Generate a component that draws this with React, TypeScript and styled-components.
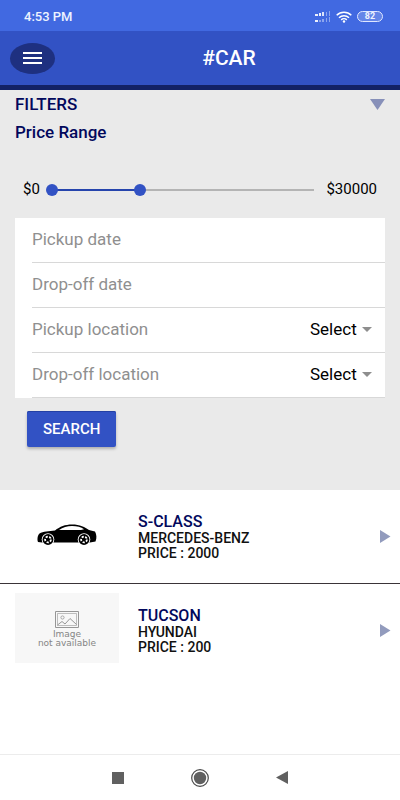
import React, { useState } from "react";
import styled, { createGlobalStyle } from "styled-components";

const MAX_PRICE = 30000;

const GlobalStyle = createGlobalStyle`
  *, *::before, *::after { box-sizing: border-box; }
  body {
    margin: 0;
    background: #ffffff;
    color: #000000;
    font-family: Roboto, "Liberation Sans", sans-serif;
    font-size: 17px;
  }
  button, input, select { font: inherit; color: inherit; }
  button { cursor: pointer; }
`;

const Page = styled.div`
  display: flex;
  flex-direction: column;
  min-height: 100vh;
`;

const StatusBar = styled.div`
  display: flex;
  align-items: center;
  justify-content: space-between;
  height: 31px;
  padding: 2px 17px 0 24px;
  background: #4169e1;
  color: #eef3ff;
`;

const Clock = styled.span`
  font-size: 13px;
  font-weight: 500;
  line-height: 16px;
`;

const StatusIcons = styled.div`
  display: flex;
  align-items: center;
  gap: 5px;
`;

const Battery = styled.span`
  width: 26px;
  height: 11px;
  border: 1px solid #dfe7ff;
  border-radius: 6px;
  background: #6485e8;
  font-size: 9px;
  font-weight: 700;
  line-height: 9px;
  text-align: center;
`;

const Header = styled.header`
  display: grid;
  grid-template-columns: 48px 1fr;
  align-items: center;
  height: 59px;
  padding-left: 10px;
  border-bottom: 5px solid #132266;
  background: #3252c4;
  color: #ffffff;
`;

const MenuButton = styled.button`
  display: flex;
  align-items: center;
  justify-content: center;
  width: 45px;
  height: 31px;
  padding: 0;
  border: 0;
  border-radius: 50%;
  background: #1e3080;
`;

const Title = styled.h1`
  margin: 0;
  font-size: 21px;
  font-weight: 500;
  line-height: 24px;
  text-align: center;
`;

const Filters = styled.section`
  padding: 4px 15px 43px;
  background: #eaeaea;
`;

const FiltersHead = styled.div`
  display: flex;
  align-items: center;
  justify-content: space-between;
`;

const Heading = styled.h2`
  margin: 0;
  color: #02085c;
  font-size: 17px;
  font-weight: 500;
  line-height: 20px;
`;

const SubHeading = styled(Heading).attrs({ as: "h3" })`
  margin-top: 8px;
`;

const IconButton = styled.button`
  display: flex;
  padding: 0;
  border: 0;
  background: none;
`;

const PriceRow = styled.div`
  display: flex;
  align-items: center;
  height: 20px;
  margin: 37px 8px 19px;
`;

const PriceLabel = styled.span`
  font-size: 15px;
  line-height: 20px;
`;

const Slider = styled.div`
  position: relative;
  flex: 1;
  height: 12px;
  margin: 2px 12px 0 6px;
`;

const Track = styled.div`
  height: 2px;
  margin: 5px 0 0 6px;
  background: #b4b4b4;
`;

const TrackFill = styled.div`
  height: 2px;
  background: #2645ad;
`;

const RangeInput = styled.input.attrs({ type: "range" })`
  position: absolute;
  top: 0;
  left: 0;
  width: 100%;
  height: 12px;
  margin: 0;
  appearance: none;
  background: none;
  pointer-events: none;

  &::-webkit-slider-thumb {
    width: 12px;
    height: 12px;
    border: 0;
    border-radius: 50%;
    appearance: none;
    background: #3252c4;
    pointer-events: auto;
  }
`;

const FormCard = styled.div`
  padding-left: 17px;
  background: #ffffff;
`;

const Field = styled.div`
  display: flex;
  align-items: center;
  height: 45px;
  padding: 0 13px 2px 0;
  border-bottom: 1px solid #d8d8d8;
`;

const FieldLabel = styled.label`
  flex: 1;
  color: #8f8f8f;
  line-height: 20px;
  white-space: nowrap;
`;

const DateInput = styled.input`
  width: 50%;
  min-width: 0;
  padding: 0;
  border: 0;
  outline: 0;
  background: none;
`;

const SelectBox = styled.span`
  display: flex;
  align-items: center;
  gap: 5px;
`;

const Select = styled.select`
  padding: 0;
  border: 0;
  outline: 0;
  appearance: none;
  background: none;
  line-height: 20px;
`;

const SearchButton = styled.button`
  height: 36px;
  margin: 13px 0 0 12px;
  padding: 0 16px;
  border: 0;
  border-radius: 2px;
  background: #3252c4;
  box-shadow: 0 2px 3px rgba(0, 0, 0, 0.25), inset 0 1px 0 #2340a4;
  color: #ffffff;
  font-size: 15px;
  font-weight: 500;
`;

const CarList = styled.ul`
  margin: 0;
  padding: 0;
  list-style: none;
`;

const CarRow = styled.li`
  display: grid;
  grid-template-columns: 104px 1fr auto;
  align-items: center;
  column-gap: 19px;
  min-height: 94px;
  padding: 9px 9px 10px 15px;
  border-bottom: 1px solid #3a3438;

  &:last-child { border-bottom-color: transparent; }
`;

const Thumb = styled.div<{ $empty?: boolean }>`
  display: flex;
  flex-direction: column;
  align-items: center;
  align-self: start;
  justify-content: center;
  height: 70px;
  padding-top: 2px;
  background: ${(p) => (p.$empty ? "#f7f7f7" : "#ffffff")};
  color: #858585;
  font-family: "DejaVu Sans", sans-serif;
  font-size: 9px;
  line-height: 9px;
  text-align: center;

  svg { margin-bottom: ${(p) => (p.$empty ? "2px" : "0")}; }
`;

const CarName = styled.h3`
  margin: 0;
  color: #02085c;
  font-size: 16px;
  font-weight: 500;
  line-height: 19px;
`;

const CarText = styled.p`
  margin: 0;
  color: #111111;
  font-size: 14px;
  font-weight: 500;
  line-height: 15px;
`;

const NavBar = styled.nav`
  display: flex;
  align-items: center;
  justify-content: center;
  gap: 62px;
  height: 46px;
  margin-top: auto;
  border-top: 1px solid #ececec;
`;

const NavButton = styled(IconButton)`
  justify-content: center;
  width: 20px;
`;

const SignalIcon = () => (
  <svg width="16" height="12" viewBox="0 0 16 12" fill="#ffffff" aria-hidden="true">
    <path d="M0 3h3v2H0zM4 2h2v3H4zM0 9h3v2H0z" opacity=".9" />
    <path d="M7 1h2v4H7z" opacity=".8" />
    <path d="M11 1h1v4h-1zM14 0h1v5h-1zM4 9h2v2H4zM7 8h2v3H7zM11 7h1v4h-1zM14 6h1v5h-1z" opacity=".4" />
  </svg>
);

const WifiIcon = () => (
  <svg width="16" height="12" viewBox="0 0 16 12" fill="none" stroke="#ffffff" aria-hidden="true">
    <path d="M.7 4.3a10.5 10.5 0 0 1 14.6 0M3 6.7a7.2 7.2 0 0 1 10 0M5.2 8.9a4 4 0 0 1 5.600 0" strokeWidth="1.5" />
    <circle cx="8" cy="10.5" r="1.2" fill="#ffffff" stroke="none" />
  </svg>
);

const MenuIcon = () => (
  <svg width="19" height="12" viewBox="0 0 19 12" fill="#ffffff" aria-hidden="true">
    <path d="M0 0h19v2H0zM0 5h19v2H0zM0 10h19v2H0z" />
  </svg>
);

const CarIcon = () => (
  <svg width="60" height="22" viewBox="0 0 60 22" aria-hidden="true">
    <path
      d="M1 18C0 16 .5 11 2.500 9.500C6 7.500 12 7 18 6.500C23 2.500 28 .5 35 .5C43 .5 48 3 52 6L58 7.500C59.500 10 60 14 58.500 17.500L53 18.500H5Z"
      fill="#000000"
    />
    <path d="M22 6C26 3 30 1.900 35 1.900C40 1.900 44 3 47 5.200L44 6H22Z" fill="#ffffff" />
    {[11, 47].map((cx) => (
      <g key={cx}>
        <circle cx={cx} cy="15.500" r="6.300" fill="#ffffff" />
        <circle cx={cx} cy="15.500" r="5.400" fill="#000000" />
        <circle cx={cx} cy="15.500" r="2.900" fill="none" stroke="#ffffff" strokeWidth="1.800" strokeDasharray="2.200 1.440" />
      </g>
    ))}
  </svg>
);

const NoImageIcon = () => (
  <svg width="24" height="17" viewBox="0 0 24 17" fill="none" stroke="#969696" aria-hidden="true">
    <path d="M.5.500h23v16H.5z" />
    <path d="M2.500 2.500h19v12h-19z" strokeWidth=".6" />
    <circle cx="7.500" cy="6.500" r="1.600" strokeWidth=".8" />
    <path d="M2.500 14 7 10.500l3 2.500 5-5.500 6.500 6" />
  </svg>
);

const RowArrow = () => (
  <svg width="11" height="13" viewBox="0 0 11 13" fill="#929bbd" aria-hidden="true">
    <path d="M0 0 10.500 6.500 0 13z" />
  </svg>
);

interface Car {
  name: string;
  maker: string;
  price: number;
  hasImage: boolean;
}

const cars: Car[] = [
  { name: "S-CLASS", maker: "MERCEDES-BENZ", price: 2000, hasImage: true },
  { name: "TUCSON", maker: "HYUNDAI", price: 200, hasImage: false },
];

function LocationField({ id, label }: { id: string; label: string }) {
  return (
    <Field>
      <FieldLabel htmlFor={id}>{label}</FieldLabel>
      <SelectBox>
        <Select id={id}>
          <option>Select</option>
        </Select>
        <svg width="10" height="5" viewBox="0 0 10 5" fill="#8e8e8e" aria-hidden="true">
          <path d="M0 0h10L5 5z" />
        </svg>
      </SelectBox>
    </Field>
  );
}

function DateField({ id, label }: { id: string; label: string }) {
  return (
    <Field>
      <FieldLabel htmlFor={id}>{label}</FieldLabel>
      <DateInput id={id} type="text" />
    </Field>
  );
}

function PriceSlider() {
  const [low, setLow] = useState(0);
  const [high, setHigh] = useState(10300);
  const start = (low / MAX_PRICE) * 100;
  const width = ((high - low) / MAX_PRICE) * 100;
  return (
    <PriceRow>
      <PriceLabel>$0</PriceLabel>
      <Slider>
        <Track>
          <TrackFill style={{ marginLeft: `${start}%`, width: `${width}%` }} />
        </Track>
        <RangeInput
          aria-label="Minimum price"
          min={0}
          max={MAX_PRICE}
          step={100}
          value={low}
          onChange={(e) => setLow(Math.min(Number(e.target.value), high))}
        />
        <RangeInput
          aria-label="Maximum price"
          min={0}
          max={MAX_PRICE}
          step={100}
          value={high}
          onChange={(e) => setHigh(Math.max(Number(e.target.value), low))}
        />
      </Slider>
      <PriceLabel>$30000</PriceLabel>
    </PriceRow>
  );
}

export default function App() {
  return (
    <Page>
      <GlobalStyle />
      <StatusBar>
        <Clock>4:53 PM</Clock>
        <StatusIcons>
          <SignalIcon />
          <WifiIcon />
          <Battery>82</Battery>
        </StatusIcons>
      </StatusBar>
      <Header>
        <MenuButton type="button" aria-label="Menu">
          <MenuIcon />
        </MenuButton>
        <Title>#CAR</Title>
      </Header>
      <main>
        <Filters>
          <FiltersHead>
            <Heading>FILTERS</Heading>
            <IconButton type="button" aria-label="Toggle filters">
              <svg width="15" height="11" viewBox="0 0 15 11" fill="#8790b9" aria-hidden="true">
                <path d="M0 0h15L7.500 11z" />
              </svg>
            </IconButton>
          </FiltersHead>
          <SubHeading>Price Range</SubHeading>
          <PriceSlider />
          <FormCard>
            <DateField id="pickup-date" label="Pickup date" />
            <DateField id="dropoff-date" label="Drop-off date" />
            <LocationField id="pickup-location" label="Pickup location" />
            <LocationField id="dropoff-location" label="Drop-off location" />
          </FormCard>
          <SearchButton type="button">SEARCH</SearchButton>
        </Filters>
        <CarList>
          {cars.map((car) => (
            <CarRow key={car.name}>
              <Thumb $empty={!car.hasImage}>
                {car.hasImage ? (
                  <CarIcon />
                ) : (
                  <>
                    <NoImageIcon />
                    <span>Image</span>
                    <span>not available</span>
                  </>
                )}
              </Thumb>
              <div>
                <CarName>{car.name}</CarName>
                <CarText>{car.maker}</CarText>
                <CarText>PRICE : {car.price}</CarText>
              </div>
              <IconButton type="button" aria-label={`Open ${car.name}`}>
                <RowArrow />
              </IconButton>
            </CarRow>
          ))}
        </CarList>
      </main>
      <NavBar aria-label="System">
        <NavButton type="button" aria-label="Recent apps">
          <svg width="12" height="12" viewBox="0 0 12 12" aria-hidden="true">
            <path d="M0 0h12v12H0z" fill="#606060" />
          </svg>
        </NavButton>
        <NavButton type="button" aria-label="Home">
          <svg width="18" height="18" viewBox="0 0 18 18" aria-hidden="true">
            <circle cx="9" cy="9" r="8.300" fill="none" stroke="#4a4a4a" strokeWidth="1.200" />
            <circle cx="9" cy="9" r="6.200" fill="#606060" />
          </svg>
        </NavButton>
        <NavButton type="button" aria-label="Back">
          <svg width="12" height="13" viewBox="0 0 12 13" aria-hidden="true">
            <path d="M12 0v13L0 6.500z" fill="#606060" />
          </svg>
        </NavButton>
      </NavBar>
    </Page>
  );
}
